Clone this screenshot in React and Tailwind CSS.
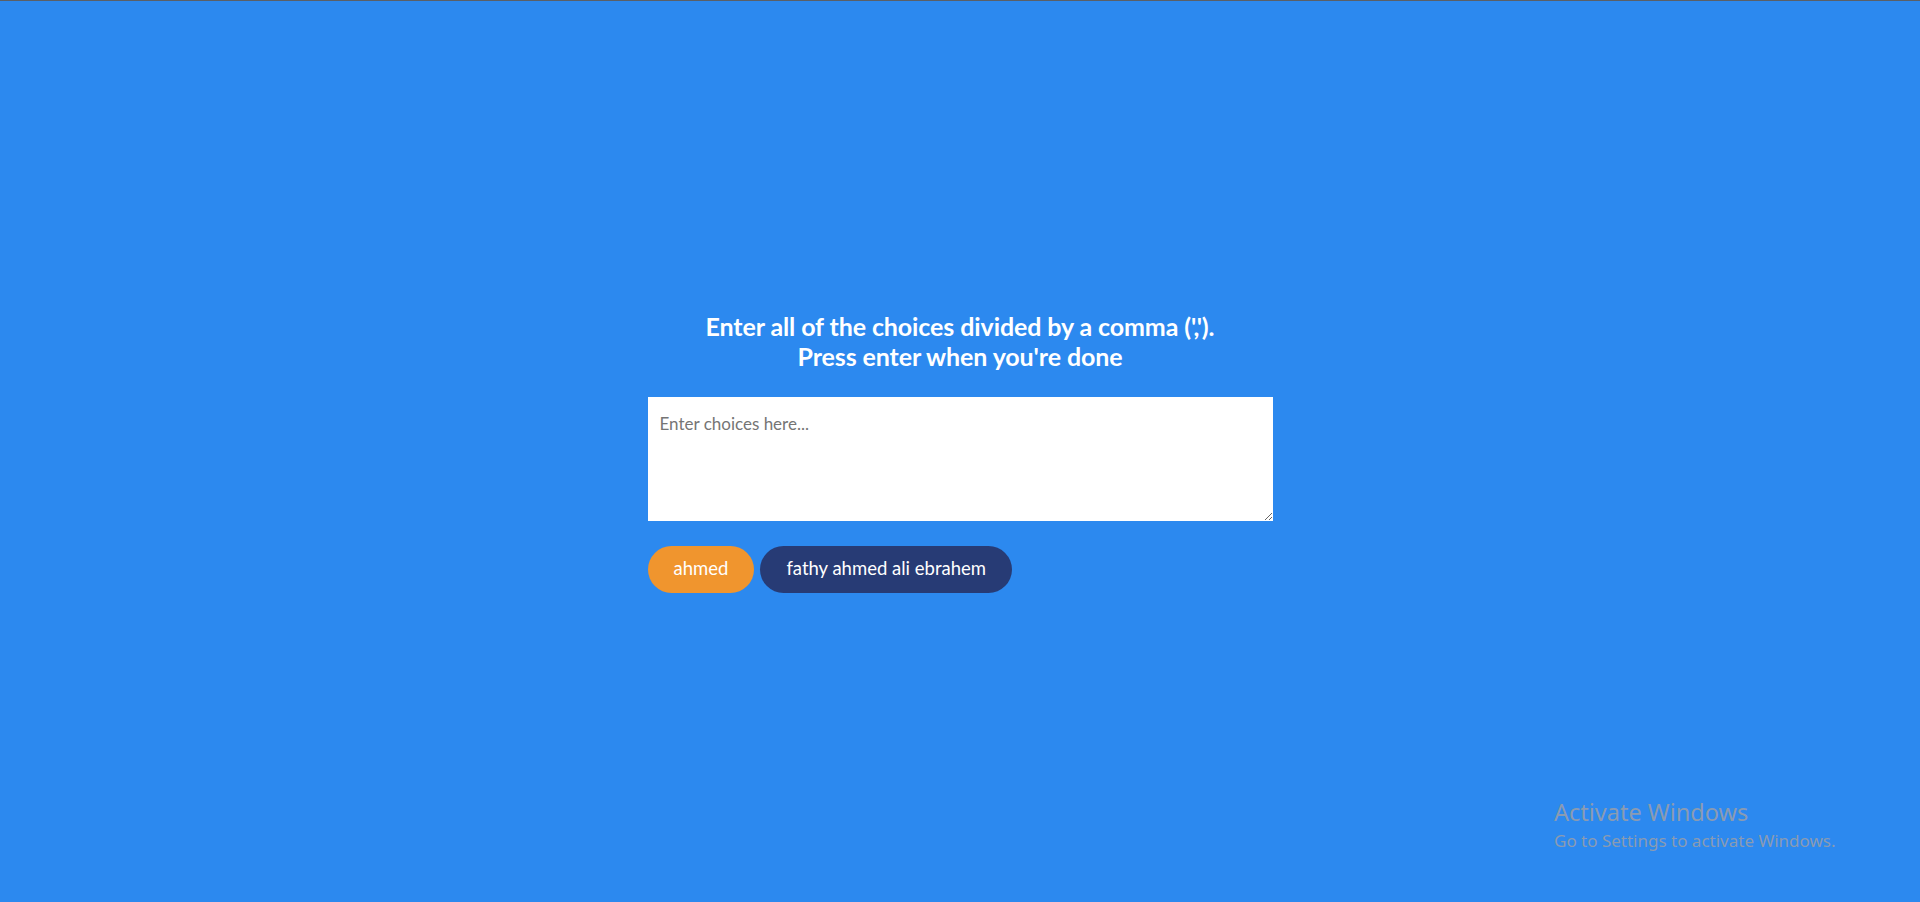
import React, { useState } from 'react';

const choices = [
    { label: 'ahmed', active: true },
    { label: 'fathy ahmed ali ebrahem', active: false },
];

export default function App() {
    const [text, setText] = useState('');

    return (
        <div className="relative h-[902px] w-full bg-[#2c89ef] border-t border-[#5a5f66] flex items-center justify-center" style={{ fontFamily: 'Lato, "Open Sans", sans-serif' }}>
            <div className="w-[625px] flex flex-col">
                <h1 className="text-center text-white font-bold text-[25px] leading-[30px] tracking-[-0.1px]">
                    Enter all of the choices divided by a comma (',').
                    <br />
                    Press enter when you're done
                </h1>

                <textarea
                    value={text}
                    onChange={(e) => setText(e.target.value)}
                    placeholder="Enter choices here..."
                    className="mt-[26px] h-[124px] w-full bg-white px-3 pt-[14px] pb-3 text-[17px] text-gray-700 placeholder:text-[#757575] outline-none"
                />

                <div className="mt-[25px] flex gap-[6px]">
                    {choices.map((c) => (
                        <span
                            key={c.label}
                            className={
                                'h-[47px] flex items-center rounded-full px-[26px] text-[18.5px] text-white ' +
                                (c.active ? 'bg-[#f0952e]' : 'bg-[#273b75]')
                            }
                        >
                            {c.label}
                        </span>
                    ))}
                </div>
            </div>

            {/* windows watermark */}
            <div className="absolute left-[1554px] top-[796px] text-[#8a9bb2]" style={{ fontFamily: '"Noto Sans", sans-serif' }}>
                <div className="text-[23.5px] leading-[30px]">Activate Windows</div>
                <div className="text-[17px] leading-[22px] mt-[3px]">Go to Settings to activate Windows.</div>
            </div>
        </div>
    );
}
